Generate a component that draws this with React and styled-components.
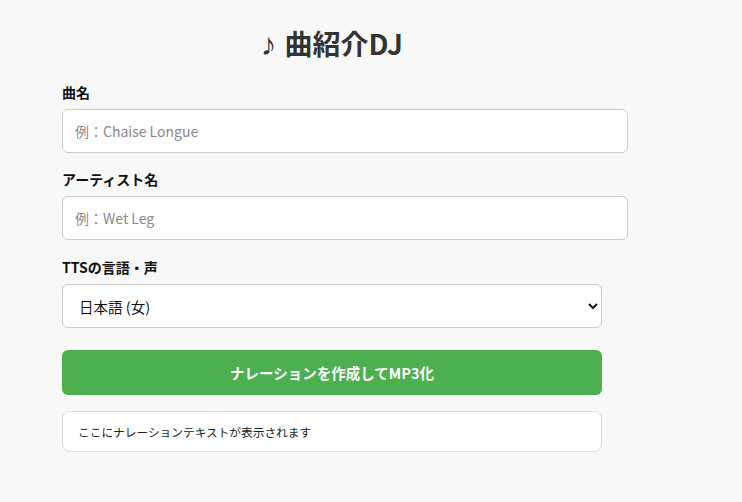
import styled, { createGlobalStyle } from "styled-components";

const Global = createGlobalStyle`
  html, body {
    margin: 0;
    background: #f8f8f8;
    font-family: "Noto Sans CJK JP", "Noto Sans", sans-serif;
  }
`;

const Page = styled.div`
  padding: 24px 0 40px 62px;
`;

const Main = styled.main`
  width: 540px;
`;

const Title = styled.h1`
  margin: 0 0 20px;
  height: 38px;
  font-size: 28px;
  line-height: 38px;
  font-weight: 700;
  color: #333;
  text-align: center;
`;

const Note = styled.span`
  display: inline-block;
  font-family: "Liberation Sans", "DejaVu Sans", sans-serif;
  font-size: 31px;
  line-height: 1;
  margin-right: 8px;
`;

const Field = styled.div`
  margin-bottom: ${(p) => p.$gap ?? 16}px;
`;

const Label = styled.label`
  display: block;
  margin-bottom: 7px;
  font-size: 14px;
  line-height: 20px;
  font-weight: 700;
  color: #111;
`;

const Input = styled.input`
  display: block;
  width: 100%;
  height: 42px;
  padding: 0 12px;
  border: 1px solid #ccc;
  border-radius: 6px;
  background: #fff;
  font-family: inherit;
  font-size: 14px;
  color: #222;
  outline: none;
  &::placeholder {
    color: #888;
  }
`;

const Select = styled.select`
  display: block;
  box-sizing: border-box;
  width: 100%;
  height: 44px;
  padding: 0 8px 0 12px;
  border: 1px solid #ccc;
  border-radius: 6px;
  background: #fff;
  font-family: inherit;
  font-size: 14.5px;
  color: #111;
`;

const Button = styled.button`
  display: block;
  box-sizing: border-box;
  width: 100%;
  height: 45px;
  margin-top: 22px;
  border: none;
  border-radius: 6px;
  background: #4caf50;
  color: #fff;
  font-family: inherit;
  font-size: 14.5px;
  font-weight: 700;
  cursor: pointer;
`;

const Output = styled.div`
  box-sizing: border-box;
  margin-top: 16px;
  height: 41px;
  padding: 0 15px;
  display: flex;
  align-items: center;
  border: 1px solid #ddd;
  border-radius: 8px;
  background: #fff;
  font-size: 11.7px;
  color: #222;
`;

export default function App() {
  return (
    <>
      <Global />
      <Page>
        <Main>
          <Title>
            <Note>♪</Note>曲紹介DJ
          </Title>
          <Field>
            <Label htmlFor="song">曲名</Label>
            <Input id="song" placeholder="例：Chaise Longue" />
          </Field>
          <Field $gap={17}>
            <Label htmlFor="artist">アーティスト名</Label>
            <Input id="artist" placeholder="例：Wet Leg" />
          </Field>
          <Field $gap={0}>
            <Label htmlFor="voice">TTSの言語・声</Label>
            <Select id="voice" defaultValue="ja-f">
              <option value="ja-f">日本語 (女)</option>
              <option value="ja-m">日本語 (男)</option>
              <option value="en-f">English (Female)</option>
            </Select>
          </Field>
          <Button>ナレーションを作成してMP3化</Button>
          <Output>ここにナレーションテキストが表示されます</Output>
        </Main>
      </Page>
    </>
  );
}
